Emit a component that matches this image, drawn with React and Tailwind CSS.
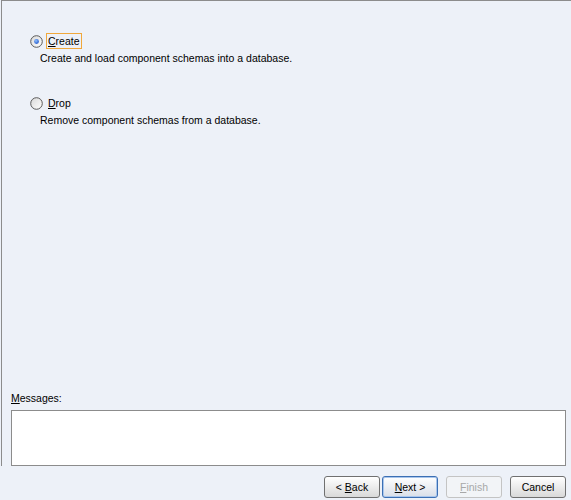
import React from 'react';

function Radio({ checked }) {
  return (
    <svg width="13" height="13" viewBox="0 0 13 13" className="shrink-0">
      <defs>
        <linearGradient id={checked ? 'rg1' : 'rg2'} x1="0" y1="0" x2="1" y2="1">
          <stop offset="0" stopColor="#d8d8d8" />
          <stop offset="1" stopColor="#ffffff" />
        </linearGradient>
        <radialGradient id="dot" cx="0.4" cy="0.35" r="0.7">
          <stop offset="0" stopColor="#8fc0ff" />
          <stop offset="1" stopColor="#1f55c9" />
        </radialGradient>
      </defs>
      <circle cx="6.5" cy="6.5" r="5.8" fill={`url(#${checked ? 'rg1' : 'rg2'})`} stroke="#5a5a5a" strokeWidth="1" />
      {checked && <circle cx="6.5" cy="6.5" r="2.4" fill="url(#dot)" />}
    </svg>
  );
}

function Option({ checked, mnemonic, rest, desc, focused }) {
  return (
    <div className="flex flex-col">
      <div className="flex items-center h-[16px]">
        <Radio checked={checked} />
        <span
          className={`ml-[3px] px-[1px] leading-[14px] border ${
            focused ? 'border-[#f0a83c]' : 'border-transparent'
          }`}
        >
          <span className="underline underline-offset-1">{mnemonic}</span>
          {rest}
        </span>
      </div>
      <div className="ml-[10px] mt-[3px] leading-[13px]">{desc}</div>
    </div>
  );
}

function Button({ mnemonic, before, after, isDefault, disabled }) {
  const base = 'w-[56px] h-[22px] rounded-[3px] flex items-center justify-center leading-none whitespace-pre';
  let look = 'border border-[#707070] bg-gradient-to-b from-white to-[#d9d9d9] text-black';
  if (isDefault) look = 'border border-[#3c6fb4] bg-gradient-to-b from-white to-[#d9dee8] text-black shadow-[inset_0_0_0_1px_#a9c6ec]';
  if (disabled) look = 'border border-[#c4c4c4] bg-[#f2f4f7] text-[#a8a8a8]';
  return (
    <div className={`${base} ${look}`}>
      <span>
        {before}
        <span className="underline underline-offset-1">{mnemonic}</span>
        {after}
      </span>
    </div>
  );
}

export default function App() {
  return (
    <div className="w-[571px] h-[500px] bg-[#edf1f8] font-['Liberation_Sans',Arial,sans-serif] text-[10.5px] text-black flex flex-col overflow-hidden">
      <div className="ml-[1px] h-[466px] border-l border-t border-[#8c8c8c] flex flex-col">
        <div className="pl-[28px] pt-[32px] flex flex-col gap-[30px]">
          <Option
            checked
            focused
            mnemonic="C"
            rest="reate"
            desc="Create and load component schemas into a database."
          />
          <Option mnemonic="D" rest="rop" desc="Remove component schemas from a database." />
        </div>
        <div className="mt-auto pl-[9px] pr-[5px]">
          <div className="leading-[13px]">
            <span className="underline underline-offset-1">M</span>essages:
          </div>
          <div className="mt-[5px] h-[56px] bg-white border border-[#8c8c8c]" />
        </div>
      </div>
      <div className="flex justify-end items-start pt-[10px] pr-[5px]">
        <Button before={'<\u00a0'} mnemonic="B" after="ack" />
        <div className="ml-[2px]">
          <Button isDefault mnemonic="N" after={'ext\u00a0>'} />
        </div>
        <div className="ml-[8px]">
          <Button disabled mnemonic="F" after="inish" />
        </div>
        <div className="ml-[8px]">
          <Button mnemonic="" after="Cancel" />
        </div>
      </div>
    </div>
  );
}
